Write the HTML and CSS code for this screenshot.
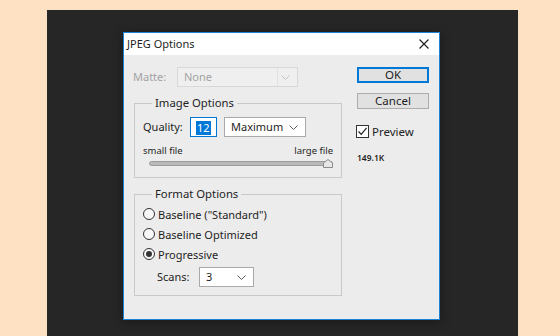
FILE: index.html
```html
<!DOCTYPE html>
<html>
<head>
    <title>JPEG Options</title>
    <meta charset="UTF-8">
    <link rel="stylesheet" href="styles.css">
</head>
<body>
    <div class="backdrop">
        <div class="dialog">
            <div class="titlebar">
                <span class="title">JPEG Options</span>
                <svg class="close" width="10" height="10" viewBox="0 0 10 10">
                    <path d="M0.5 0.5 L9.5 9.5 M9.5 0.5 L0.5 9.5" stroke="#1e1e1e" stroke-width="1.1" fill="none"/>
                </svg>
            </div>
            <div class="dialog-body">
                <div class="main">
                    <div class="matte-row">
                        <span class="label matte-label disabled">Matte:</span>
                        <div class="combo combo-disabled matte-combo">
                            <span>None</span>
                            <span class="combo-split"></span>
                            <svg class="chev" width="9" height="5" viewBox="0 0 9 5"><path d="M0.5 0.5 L4.5 4.5 L8.5 0.5" stroke="#c4c4c4" fill="none"/></svg>
                        </div>
                    </div>

                    <fieldset class="group image-group">
                        <legend>Image Options</legend>
                        <div class="quality-row">
                            <span class="label quality-label">Quality:</span>
                            <div class="num-field"><span class="selected">12</span></div>
                            <div class="combo quality-combo">
                                <span>Maximum</span>
                                <svg class="chev" width="9" height="5" viewBox="0 0 9 5"><path d="M0.5 0.5 L4.5 4.5 L8.5 0.5" stroke="#5a5a5a" fill="none"/></svg>
                            </div>
                        </div>
                        <div class="size-labels">
                            <span>small file</span>
                            <span>large file</span>
                        </div>
                        <div class="slider">
                            <div class="track"></div>
                            <svg class="thumb" width="10" height="9" viewBox="0 0 10 9">
                                <path d="M0.5 8.5 L0.5 4 L5 0.5 L9.5 4 L9.5 8.5 Z" fill="#e6e6e6" stroke="#8c8c8c"/>
                            </svg>
                        </div>
                    </fieldset>

                    <fieldset class="group format-group">
                        <legend>Format Options</legend>
                        <label class="radio-row"><span class="radio"></span>Baseline (&quot;Standard&quot;)</label>
                        <label class="radio-row"><span class="radio"></span>Baseline Optimized</label>
                        <label class="radio-row"><span class="radio checked"></span>Progressive</label>
                        <div class="scans-row">
                            <span class="label scans-label">Scans:</span>
                            <div class="combo scans-combo">
                                <span>3</span>
                                <svg class="chev" width="9" height="5" viewBox="0 0 9 5"><path d="M0.5 0.5 L4.5 4.5 L8.5 0.5" stroke="#5a5a5a" fill="none"/></svg>
                            </div>
                        </div>
                    </fieldset>
                </div>

                <div class="side">
                    <button class="btn btn-default">OK</button>
                    <button class="btn">Cancel</button>
                    <label class="check-row">
                        <span class="checkbox">
                            <svg width="11" height="11" viewBox="0 0 11 11"><path d="M1.5 5.5 L4.2 8.3 L9.6 1.8" stroke="#1e1e1e" stroke-width="1.2" fill="none"/></svg>
                        </span>
                        Preview
                    </label>
                    <div class="file-size">149.1K</div>
                </div>
            </div>
        </div>
    </div>
</body>
</html>
```

FILE: styles.css
```css
body {
    margin: 0;
    background-color: #fee0c2;
    font-family: 'Noto Sans', 'Segoe UI', sans-serif;
    font-size: 11px;
    color: #1e1e1e;
    height: 336px;
    overflow: hidden;
}
.backdrop {
    margin-left: 47px;
    margin-top: 10px;
    width: 395px;
    height: 304px;
    padding: 22px 0 0 76px;
    background-color: #262626;
}
.dialog {
    width: 315px;
    height: 286px;
    border: 1px solid #1883d7;
    background-color: #ececec;
    box-shadow: 0 2px 10px rgba(0,0,0,0.35);
    display: flex;
    flex-direction: column;
}
.titlebar {
    height: 22px;
    background: white;
    display: flex;
    align-items: center;
    justify-content: space-between;
    padding: 0 10px 0 3px;
}
.title {
    font-size: 11px;
    line-height: 16px;
}
.dialog-body {
    display: flex;
    gap: 15px;
    padding: 12px 10px 0 10px;
}
.main {
    width: 208px;
}
.label {
    line-height: 20px;
}
.disabled {
    color: #a3a3a3;
}
.matte-row {
    display: flex;
    height: 20px;
    margin-left: -1px;
}
.matte-label {
    width: 44px;
}
.combo {
    display: flex;
    align-items: center;
    justify-content: space-between;
    box-sizing: border-box;
    height: 20px;
    padding: 0 7px 0 6px;
    background: white;
    border: 1px solid #a9a9a9;
    line-height: 18px;
}
.combo-disabled {
    background: #efefef;
    border-color: #d8d8d8;
    color: #a3a3a3;
}
.matte-combo {
    width: 121px;
}
.matte-combo span:first-child {
    flex: 1;
}
.combo-split {
    width: 1px;
    height: 18px;
    background: #e2e2e2;
    margin-right: 3px;
}
.group {
    margin: 8px 0 0 0;
    padding: 6px 8px 9px 8px;
    border: 1px solid #c9c9c9;
    min-width: 0;
}
.group legend {
    margin-left: 9px;
    padding: 0 3px;
    line-height: 16px;
    font-size: 11.3px;
}
.quality-row {
    display: flex;
    align-items: center;
    height: 20px;
}
.quality-label {
    width: 47px;
}
.num-field {
    box-sizing: border-box;
    width: 27px;
    height: 20px;
    border: 1px solid #0078d7;
    background: white;
    padding: 2px 0 0 5px;
}
.selected {
    display: inline-block;
    background: #0078d7;
    color: white;
    line-height: 14px;
    padding: 0 1px;
}
.quality-combo {
    width: 82px;
    margin-left: 7px;
}
.size-labels {
    display: flex;
    justify-content: space-between;
    font-size: 9.5px;
    line-height: 13px;
    margin-top: 7px;
}
.slider {
    position: relative;
    height: 11px;
    margin-left: 6px;
}
.track {
    position: relative;
    top: 4px;
    height: 3px;
    border: 1px solid #9c9c9c;
    border-radius: 3px;
    background: #b9b9b9;
}
.thumb {
    position: absolute;
    right: 0;
    top: 2px;
}
.format-group {
    padding: 2px 8px 8px 8px;
}
.radio-row {
    display: flex;
    align-items: center;
    height: 20px;
    gap: 3px;
}
.radio {
    box-sizing: border-box;
    width: 12px;
    height: 12px;
    border: 1px solid #333;
    border-radius: 50%;
    background: #f7f7f7;
    display: flex;
    align-items: center;
    justify-content: center;
}
.radio.checked::after {
    content: '';
    width: 6px;
    height: 6px;
    border-radius: 50%;
    background: #333;
}
.scans-row {
    display: flex;
    margin: 3px 0 0 14px;
    height: 20px;
}
.scans-label {
    width: 42px;
}
.scans-combo {
    width: 55px;
}
.side {
    width: 72px;
    display: flex;
    flex-direction: column;
}
.btn {
    box-sizing: border-box;
    height: 16px;
    padding: 0;
    border: 1px solid #adadad;
    background: #e1e1e1;
    font-family: inherit;
    font-size: 11.5px;
    line-height: 12px;
    color: #1e1e1e;
}
.btn-default {
    border: 2px solid #0078d7;
}
.btn + .btn {
    margin-top: 10px;
}
.check-row {
    display: flex;
    align-items: center;
    gap: 3px;
    margin-top: 16px;
    margin-left: -1px;
    height: 13px;
    font-size: 11.5px;
}
.checkbox {
    box-sizing: border-box;
    width: 13px;
    height: 13px;
    border: 1px solid #333;
    background: white;
    display: flex;
}
.file-size {
    margin-top: 14px;
    font-size: 8.5px;
    font-weight: 600;
}
```
